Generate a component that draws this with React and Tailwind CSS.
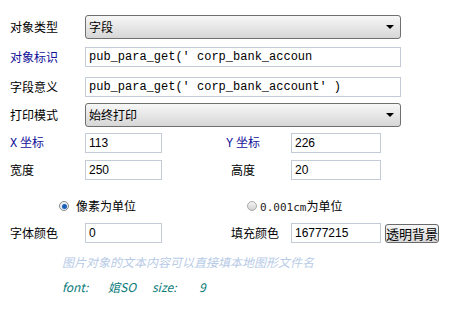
const cjk = "font-['Noto_Sans_CJK_SC','Noto_Sans',sans-serif]";
const mono = "font-['Liberation_Mono','Noto_Sans_CJK_SC',monospace]";

const Label = ({ children, blue, className = '' }) => (
  <div className={`${cjk} text-[12px] leading-none ${blue ? 'text-[#10109a]' : 'text-black'} ${className}`}>
    {children}
  </div>
);

const Field = ({ children, width, className = '' }) => (
  <div
    className={`flex h-[20px] ${width} items-center border border-[#c3cbd6] bg-white pl-[3px] text-[12px] leading-none text-black ${className}`}
  >
    {children}
  </div>
);

const Select = ({ value }) => (
  <div className="flex h-[24px] w-[316px] items-center justify-between rounded-[3px] border border-[#6f6f6f] bg-linear-to-b from-[#f7f7f7] to-[#d6d6d6] pl-[3px] pr-[6px]">
    <span className={`${cjk} text-[12px] leading-none text-black`}>{value}</span>
    <span className="h-0 w-0 border-x-[4px] border-t-[4px] border-x-transparent border-t-black" />
  </div>
);

const Radio = ({ checked }) => (
  <span
    className={`flex h-[10px] w-[10px] items-center justify-center rounded-full border ${
      checked ? 'border-[#8a8a8a] bg-[#e8eef4]' : 'border-[#a9a9a9] bg-linear-to-b from-[#f4f4f4] to-[#d2d2d2]'
    }`}
  >
    {checked && <span className="h-[5px] w-[5px] rounded-full bg-[#1b5fb8]" />}
  </span>
);

export default function App() {
  return (
    <div className="h-[321px] w-[453px] bg-white pl-[10px] pt-[15px]">
      <div className="flex items-center">
        <Label className="w-[75px]">对象类型</Label>
        <Select value="字段" />
      </div>

      <div className="mt-[8px] flex items-center">
        <Label blue className="w-[75px]">对象标识</Label>
        <Field width="w-[316px]" className={mono}>
          pub_para_get(' corp_bank_accoun
        </Field>
      </div>

      <div className="mt-[10px] flex items-center">
        <Label className="w-[75px]">字段意义</Label>
        <Field width="w-[316px]" className={mono}>
          pub_para_get(' corp_bank_account' )
        </Field>
      </div>

      <div className="mt-[6px] flex items-center">
        <Label className="w-[75px]">打印模式</Label>
        <Select value="始终打印" />
      </div>

      <div className="mt-[6px] flex items-center">
        <Label blue className="w-[75px]">
          <span className={mono}>X</span> 坐标
        </Label>
        <Field width="w-[77px]" className="font-['Liberation_Sans',sans-serif]">113</Field>
        <Label blue className="ml-[64px] w-[65px]">
          <span className={mono}>Y</span> 坐标
        </Label>
        <Field width="w-[90px]" className="font-['Liberation_Sans',sans-serif]">226</Field>
      </div>

      <div className="mt-[7px] flex items-center">
        <Label className="w-[75px]">宽度</Label>
        <Field width="w-[77px]" className="font-['Liberation_Sans',sans-serif]">250</Field>
        <Label className="ml-[64px] w-[65px] pl-[5px]">高度</Label>
        <Field width="w-[90px]" className="font-['Liberation_Sans',sans-serif]">20</Field>
      </div>

      <div className="mt-[16px] flex h-[20px] items-center">
        <div className="ml-[49px] flex items-center gap-[7px]">
          <Radio checked />
          <Label>像素为单位</Label>
        </div>
        <div className="ml-[111px] flex items-center gap-[3px]">
          <Radio />
          <Label>
            <span className="font-['DejaVu_Sans_Mono',monospace] text-[11px] text-[#222]">0.001cm</span>为单位
          </Label>
        </div>
      </div>

      <div className="mt-[7px] flex items-center">
        <Label className="w-[75px]">字体颜色</Label>
        <Field width="w-[77px]" className="font-['Liberation_Sans',sans-serif]">0</Field>
        <Label className="ml-[64px] w-[65px] pl-[5px]">填充颜色</Label>
        <Field width="w-[90px]" className="font-['Liberation_Sans',sans-serif]">16777215</Field>
        <button
          className={`${cjk} ml-[4px] flex h-[19px] w-[54px] items-center justify-center rounded-[3px] border border-[#6a6a6a] bg-linear-to-b from-[#f6f6f6] to-[#d8d8d8] text-[13px] leading-none text-black`}
        >
          透明背景
        </button>
      </div>

      <div className={`${cjk} ml-[52px] mt-[11px] text-[12px] italic leading-[16px] text-[#b7cbe6]`}>
        图片对象的文本内容可以直接填本地图形文件名
      </div>

      <div className={`${cjk} ml-[52px] mt-[9px] flex text-[12px] italic leading-[16px] text-[#0b7b7b]`}>
        <span className="w-[46px]">font:</span>
        <span className="w-[44px]">婠SO</span>
        <span className="w-[47px]">size:</span>
        <span>9</span>
      </div>
    </div>
  );
}
